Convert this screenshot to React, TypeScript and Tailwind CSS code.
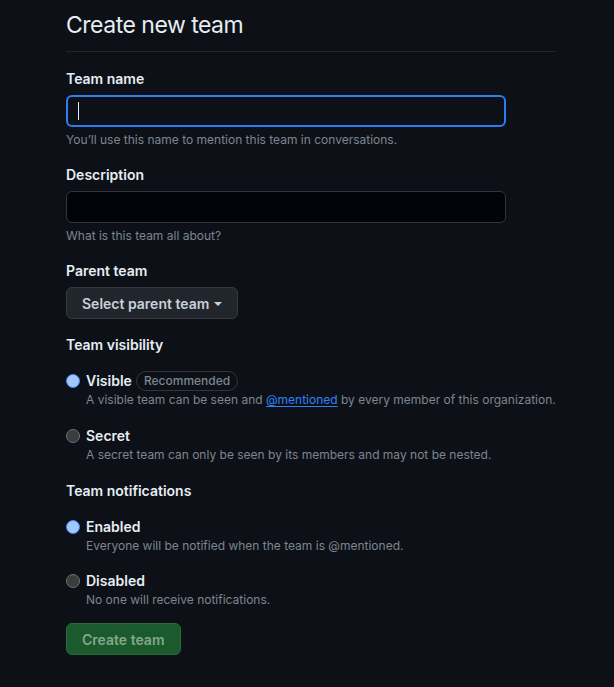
import React from "react";

function Radio({ checked }: { checked: boolean }) {
  return checked ? (
    <span className="mt-[4px] box-border inline-block h-[14px] w-[14px] shrink-0 rounded-full border-[1.5px] border-[#3f86f2] bg-[#a2c7fb]" />
  ) : (
    <span className="mt-[4px] box-border inline-block h-[14px] w-[14px] shrink-0 rounded-full border border-[#707072] bg-[#3c3c3e]" />
  );
}

function Option({
  checked,
  title,
  badge,
  children,
}: {
  checked: boolean;
  title: string;
  badge?: string;
  children: React.ReactNode;
}) {
  return (
    <div className="flex gap-[6px]">
      <Radio checked={checked} />
      <div className="flex flex-col">
        <div className="flex h-[21px] items-center gap-[4px]">
          <span className="text-[14px] font-semibold leading-[21px] text-[#e6edf3]">{title}</span>
          {badge && (
            <span className="flex h-[20px] items-center rounded-full border border-[#30363d] px-[7px] text-[12px] font-medium text-[#7d8590]">
              {badge}
            </span>
          )}
        </div>
        <div className="text-[12px] leading-[18px] text-[#7d8590]">{children}</div>
      </div>
    </div>
  );
}

function Label({ children }: { children: React.ReactNode }) {
  return <div className="text-[14px] font-semibold leading-[21px] text-[#e6edf3]">{children}</div>;
}

export default function App() {
  return (
    <div
      className="min-h-[687px] w-full bg-[#0d1117] pl-[66px]"
      style={{ fontFamily: "Inter, 'Noto Sans', 'Liberation Sans', sans-serif" }}
    >
      <div className="w-[490px]">
        <div className="border-b border-[#21262d] pt-[7px] pb-[8px]">
          <h1 className="text-[23px] font-normal leading-[36px] tracking-[-0.5px] text-[#e6edf3]">Create new team</h1>
        </div>

        <div className="mt-[16px]">
          <Label>Team name</Label>
          <div className="mt-[6px] flex h-[32px] w-[440px] items-center rounded-[6px] border-2 border-[#2f7cf0] bg-[#0d1117] px-[10px]">
            <span className="h-[18px] w-px bg-[#e6edf3]" />
          </div>
          <div className="mt-[4px] text-[12px] leading-[18px] text-[#7d8590]">
            You’ll use this name to mention this team in conversations.
          </div>
        </div>

        <div className="mt-[15px]">
          <Label>Description</Label>
          <div className="mt-[6px] h-[32px] w-[440px] rounded-[6px] border border-[#30363d] bg-[#010409]" />
          <div className="mt-[4px] text-[12px] leading-[18px] text-[#7d8590]">What is this team all about?</div>
        </div>

        <div className="mt-[15px]">
          <Label>Parent team</Label>
          <button className="mt-[6px] flex h-[32px] items-center gap-[5px] rounded-[6px] border border-[#363b42] bg-[#21262d] px-[15px] text-[14px] font-semibold text-[#c9d1d9]">
            Select parent team
            <svg width="8" height="4" viewBox="0 0 8 4" className="mt-[1px]">
              <path d="M0 0 L8 0 L4 4 Z" fill="#c9d1d9" />
            </svg>
          </button>
        </div>

        <div className="mt-[15px]">
          <Label>Team visibility</Label>
          <div className="mt-[15px] flex flex-col gap-[16px]">
            <Option checked title="Visible" badge="Recommended">
              A visible team can be seen and{" "}
              <span className="text-[#2f81f7] underline underline-offset-2">@mentioned</span> by every member of this
              organization.
            </Option>
            <Option checked={false} title="Secret">
              A secret team can only be seen by its members and may not be nested.
            </Option>
          </div>
        </div>

        <div className="mt-[16px]">
          <Label>Team notifications</Label>
          <div className="mt-[15px] flex flex-col gap-[15px]">
            <Option checked title="Enabled">
              Everyone will be notified when the team is @mentioned.
            </Option>
            <Option checked={false} title="Disabled">
              No one will receive notifications.
            </Option>
          </div>
        </div>

        <button className="mt-[14px] flex h-[32px] items-center rounded-[6px] border border-[#2a6b38] bg-[#1b5a2c] px-[15px] text-[14px] font-semibold text-[#82a889]">
          Create team
        </button>
      </div>
    </div>
  );
}
